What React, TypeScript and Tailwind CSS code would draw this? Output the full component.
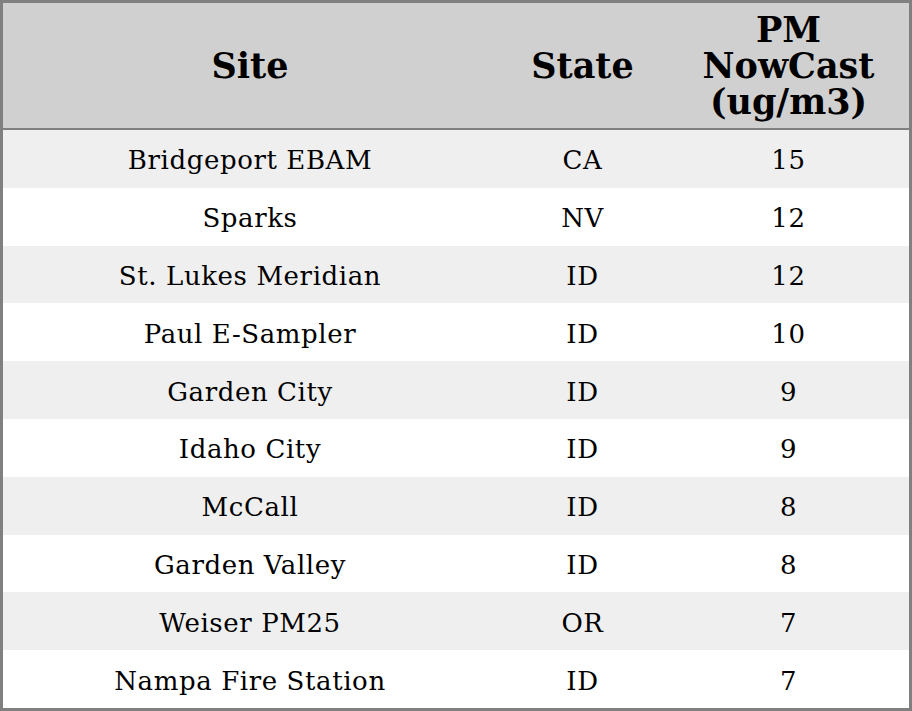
const rows: [string, string, string][] = [
  ["Bridgeport EBAM", "CA", "15"],
  ["Sparks", "NV", "12"],
  ["St. Lukes Meridian", "ID", "12"],
  ["Paul E-Sampler", "ID", "10"],
  ["Garden City", "ID", "9"],
  ["Idaho City", "ID", "9"],
  ["McCall", "ID", "8"],
  ["Garden Valley", "ID", "8"],
  ["Weiser PM25", "OR", "7"],
  ["Nampa Fire Station", "ID", "7"],
];

export default function App() {
  return (
    <div className="w-[912px] h-[711px] bg-white font-['DejaVu_Serif',serif] text-black">
      <div className="h-full border-[3px] border-[#808080] flex flex-col">
        <div className="h-[127px] shrink-0 bg-[#d0d0d0] border-b-2 border-[#808080] grid grid-cols-[494px_171px_1fr] items-center text-center font-bold text-[35px] leading-[36px]">
          <div>Site</div>
          <div>State</div>
          <div>
            PM
            <br />
            NowCast
            <br />
            (ug/m3)
          </div>
        </div>
        {rows.map(([site, state, pm], i) => (
          <div
            key={site}
            className={`flex-1 grid grid-cols-[494px_171px_1fr] items-center pt-[4px] text-center text-[26px] tracking-[0.6px] ${
              i % 2 === 0 ? "bg-[#efefef]" : "bg-white"
            }`}
          >
            <div>{site}</div>
            <div>{state}</div>
            <div>{pm}</div>
          </div>
        ))}
      </div>
    </div>
  );
}
